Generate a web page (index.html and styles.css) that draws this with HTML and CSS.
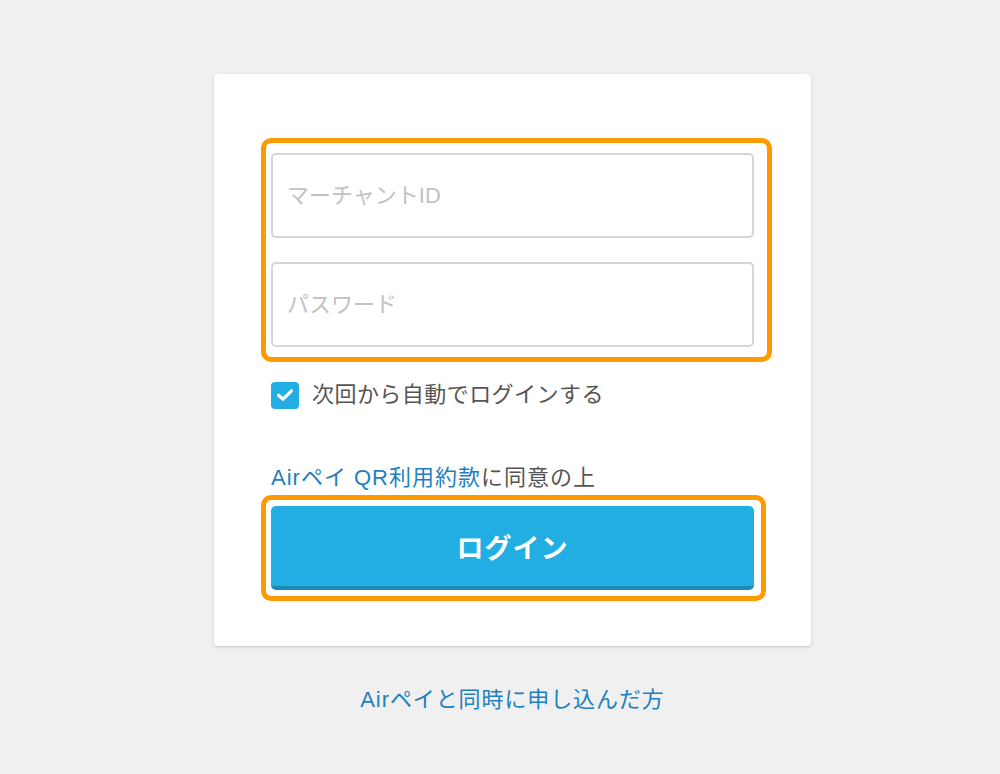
FILE: index.html
```html
<!DOCTYPE html>
<html lang="ja">
<head>
<meta charset="utf-8">
<title>ログイン</title>
<link rel="stylesheet" href="styles.css">
</head>
<body>
<main class="page">
  <form class="card">
    <div class="fields">
      <input class="field" type="text" placeholder="マーチャントID">
      <input class="field" type="password" placeholder="パスワード">
      <span class="hl hl-fields"></span>
    </div>
    <label class="remember">
      <span class="check">
        <svg width="18" height="14" viewBox="0 0 18 14"><path d="M2.5 7.2 L7 11.2 L15.5 2.8" fill="none" stroke="#fff" stroke-width="3.2" stroke-linecap="round" stroke-linejoin="round"/></svg>
      </span>
      <span class="remember-text">次回から自動でログインする</span>
    </label>
    <p class="terms"><a class="link" href="#">Airペイ QR利用約款</a>に同意の上</p>
    <div class="btn-wrap">
      <button class="btn" type="button">ログイン</button>
      <span class="hl hl-btn"></span>
    </div>
  </form>
  <a class="link bottom-link" href="#">Airペイと同時に申し込んだ方</a>
</main>
</body>
</html>
```

FILE: styles.css
```css
* { box-sizing: border-box; }
html, body { margin: 0; padding: 0; }
body {
  background: #f0f0f0;
  font-family: "Liberation Sans", "Noto Sans CJK JP", sans-serif;
  color: #555;
}
.page {
  display: flex;
  flex-direction: column;
  align-items: center;
  padding: 74px 0 0 25px;
}
.card {
  width: 597px;
  height: 572px;
  background: #fff;
  border-radius: 4px;
  box-shadow: 0 1px 3px rgba(0,0,0,0.18);
  padding: 79px 57px 57px;
  display: flex;
  flex-direction: column;
}
.fields {
  position: relative;
  display: flex;
  flex-direction: column;
  gap: 24px;
}
.field {
  height: 85px;
  border: 2px solid #d6d6d6;
  border-radius: 5px;
  padding: 0 14px;
  font-family: inherit;
  font-size: 22px;
  color: #333;
  outline: none;
  background: #fff;
}
.field::placeholder { color: #c2c2c2; }
.hl {
  position: absolute;
  border: 5px solid #ff9900;
  border-radius: 10px;
  pointer-events: none;
}
.hl-fields { left: -10px; top: -15px; right: -18px; bottom: -15px; }
.hl-btn { left: -10px; top: -11px; right: -12px; bottom: -11px; }
.remember {
  display: flex;
  align-items: center;
  gap: 13px;
  margin-top: 34px;
  height: 28px;
}
.check {
  width: 28px;
  height: 27px;
  border-radius: 4px;
  background: #22aee3;
  display: flex;
  align-items: center;
  justify-content: center;
}
.remember-text { font-size: 22px; color: #555; line-height: 28px; letter-spacing: 0.45px; }
.terms {
  margin: 55px 0 0;
  font-size: 22px;
  line-height: 28px;
  color: #555;
  letter-spacing: 1px;
}
.link { color: #1e80c0; text-decoration: none; }
.btn-wrap {
  position: relative;
  margin-top: 14px;
}
.btn {
  display: block;
  width: 100%;
  height: 84px;
  border: none;
  border-bottom: 4px solid #1b8ab6;
  border-radius: 5px;
  background: #22aee3;
  color: #fff;
  font-family: inherit;
  font-size: 27px;
  font-weight: 700;
  letter-spacing: 1px;
  padding: 0;
}
.bottom-link {
  margin-top: 40px;
  font-size: 22px;
  line-height: 28px;
  letter-spacing: 0.9px;
}
```
